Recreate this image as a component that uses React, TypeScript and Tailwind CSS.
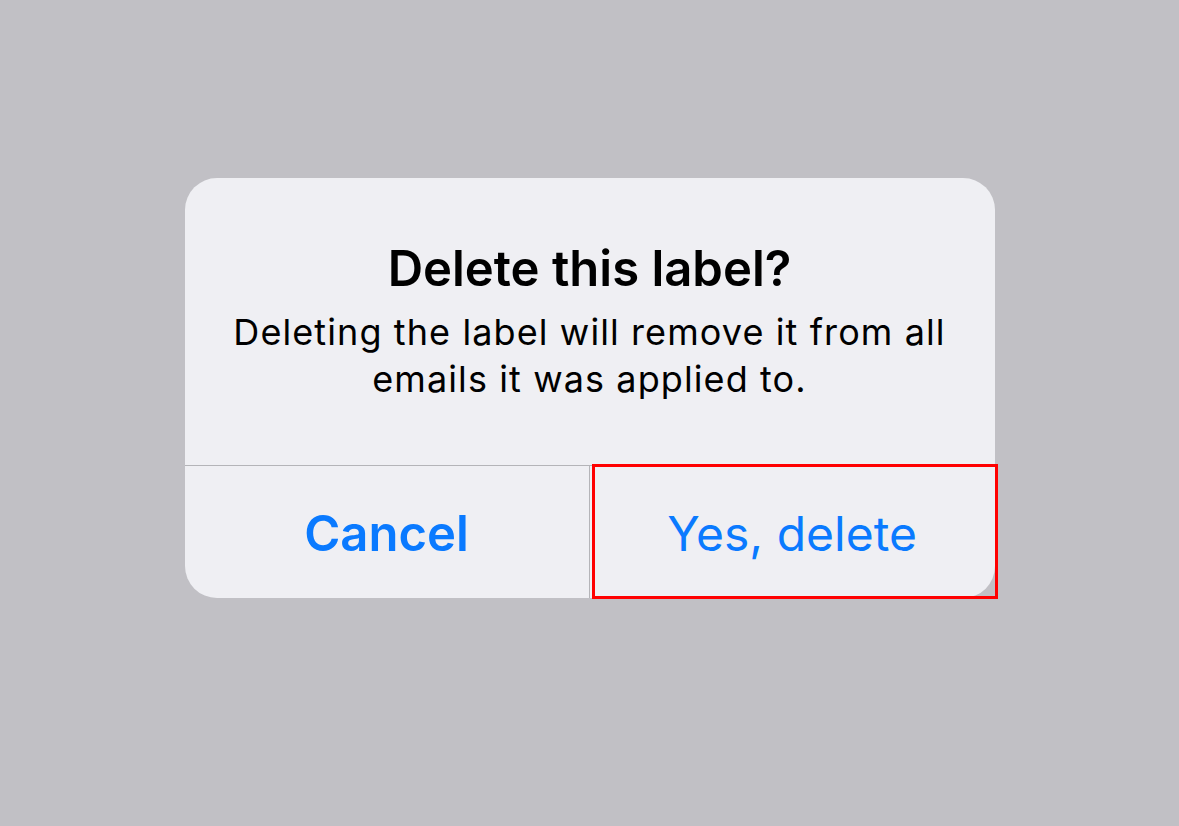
export default function App() {
  return (
    <div
      className="min-h-[826px] w-full bg-[#c1c0c5] pt-[178px]"
      style={{ fontFamily: 'Inter, "Noto Sans", sans-serif' }}
    >
      <div className="relative mx-auto w-[810px]">
        <div className="overflow-hidden rounded-[32px] bg-[#efeff3]">
          <div className="px-6 pb-[62px] pt-[61px] text-center text-black">
            <div className="text-[49px] font-semibold leading-[60px]">Delete this label?</div>
            <div className="mt-[10px] text-[36px] leading-[47px] tracking-[1.1px]">
              Deleting the label will remove it from all
              <br />
              emails it was applied to.
            </div>
          </div>
          <div className="flex h-[133px] border-t border-[#b4b4b8]">
            <button className="flex w-[405px] items-center justify-center border-r border-[#b4b4b8] pt-[4px] text-[49px] font-semibold text-[#0a7aff]">
              Cancel
            </button>
            <button className="flex flex-1 items-center justify-center pt-[4px] text-[48px] text-[#0a7aff]">
              Yes, delete
            </button>
          </div>
        </div>
        <div className="pointer-events-none absolute left-[407px] top-[286px] h-[135px] w-[406px] border-[3px] border-[#ff0000]" />
      </div>
    </div>
  );
}
